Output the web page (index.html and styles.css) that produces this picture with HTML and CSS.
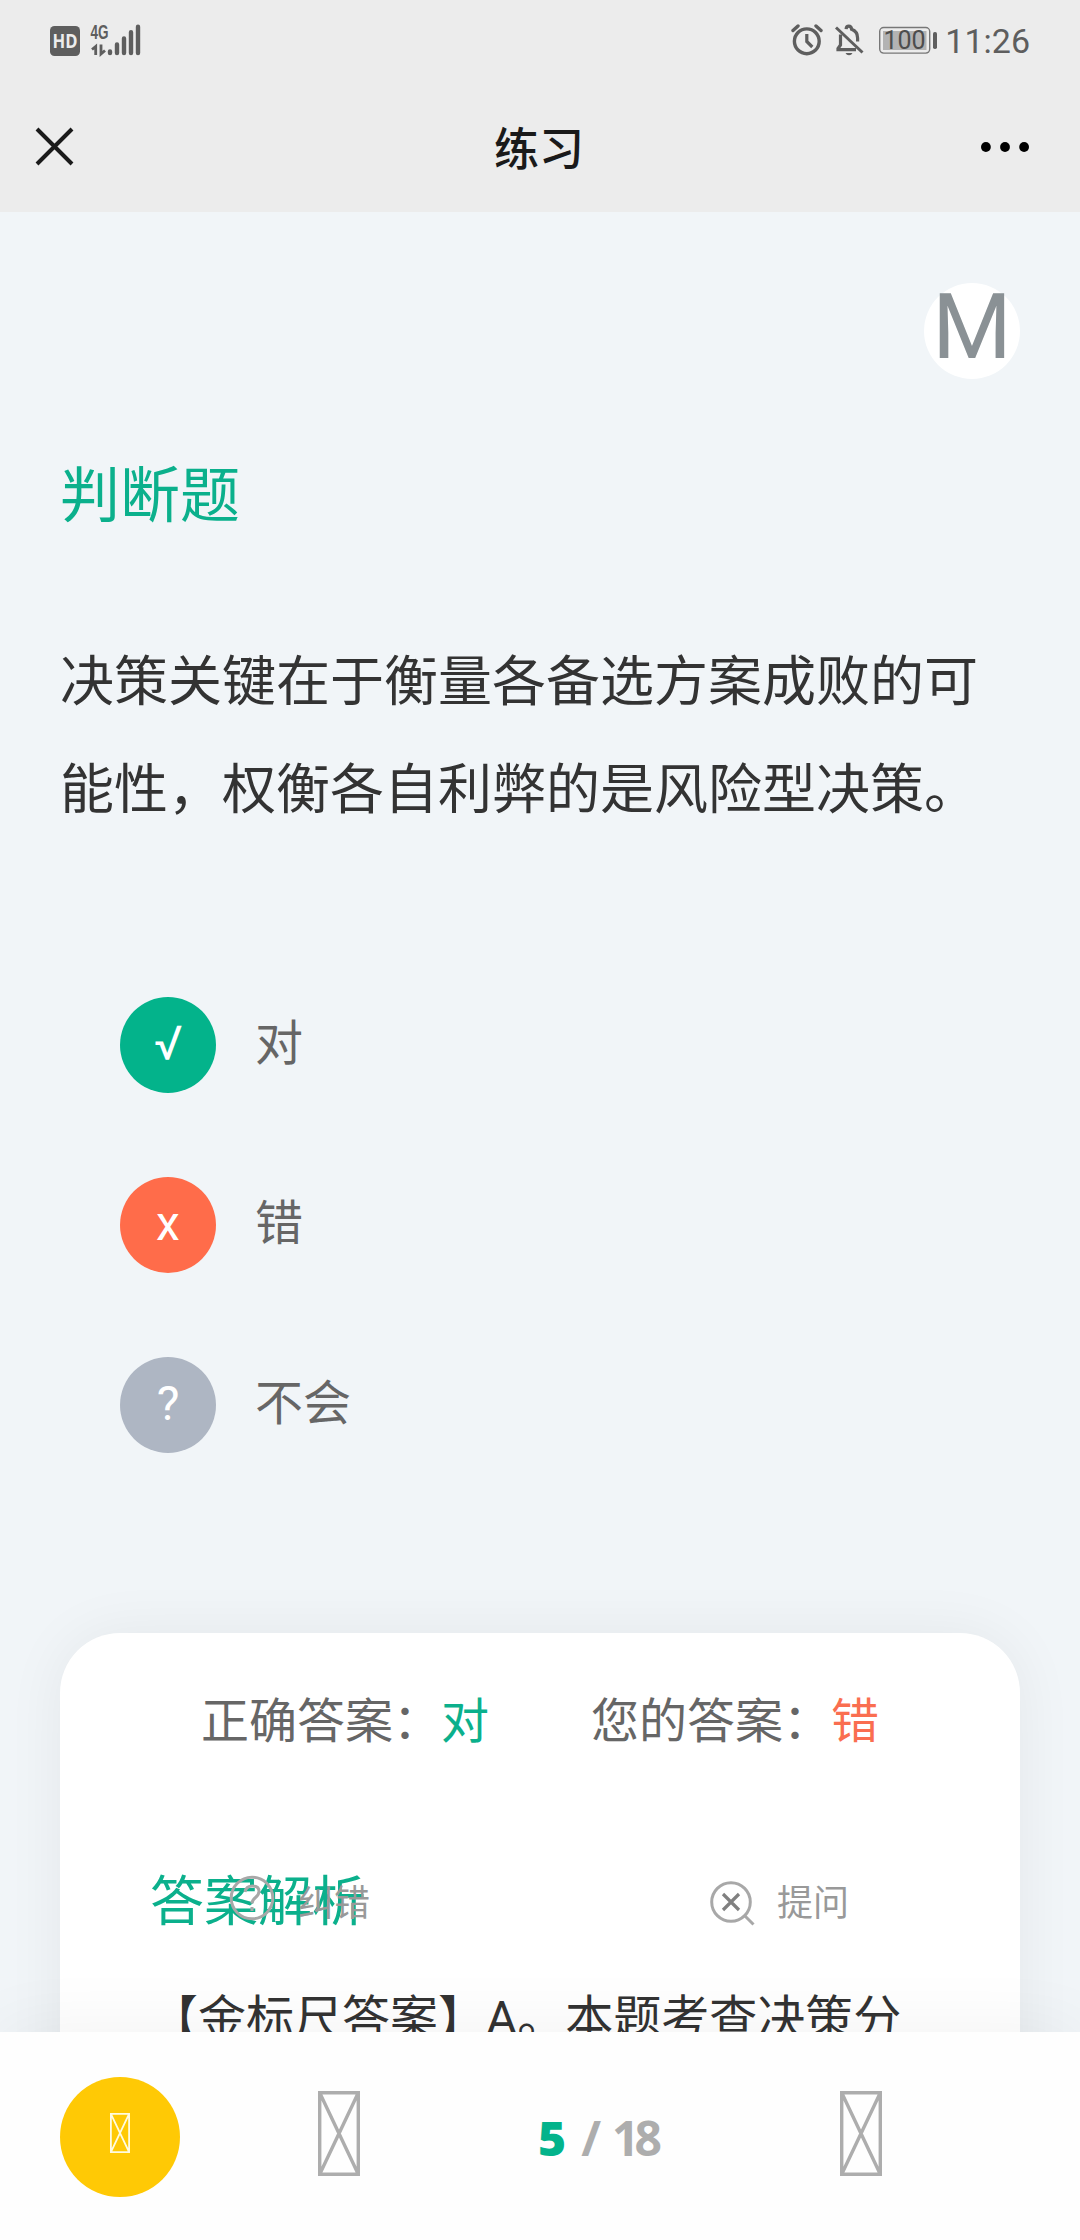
FILE: index.html
```html
<!DOCTYPE html>
<html lang="zh-CN">
<head>
<meta charset="utf-8">
<title>练习</title>
<link rel="stylesheet" href="styles.css">
</head>
<body>
<div class="screen">
  <header class="header">
    <div class="status">
      <svg class="status-left" width="92" height="50" viewBox="50 16 92 50">
        <rect x="50" y="26" width="30" height="30" rx="4.5" fill="#5e5e5e"/>
        <text x="52.6" y="48" class="hd" textLength="25" lengthAdjust="spacingAndGlyphs">HD</text>
        <text x="90.5" y="38.700" class="net" textLength="18" lengthAdjust="spacingAndGlyphs">4G</text>
        <path d="M95.700 55V46.500L92 49.500M101 44.500V54L105 50.500" fill="none" stroke="#5e5e5e" stroke-width="2.800"/>
        <path d="M110 51.500v1.500M117 44.500v8.500M124 38.500v14.500M131 32.200v20.800M138 26.800v26.200" stroke="#5e5e5e" stroke-width="4.400" stroke-linecap="round"/>
      </svg>
      <div class="status-right">
        <svg width="148" height="34" viewBox="790 24 148 34" fill="none" stroke="#5e5e5e">
          <circle cx="806.800" cy="41.300" r="12.400" stroke-width="3.400"/>
          <path d="M806.800 34v7.500l5.500 5.500" stroke-width="3.200"/>
          <path d="M793 30.500l5-4.500M821 30.500l-5-4.500" stroke-width="3.400" stroke-linecap="round"/>
          <path d="M836 27.500L862.500 52.500" stroke-width="3"/>
          <path d="M840.500 34.500V45l-2.500 3.500v1.200h18M857.600 41.500V38q0-6.500-6-8.700q-.3-3.200-2.800-3.200t-2.700 3" stroke-width="3.200"/>
          <path d="M845.500 53h7q-1 2.200-3.500 2.200t-3.500-2.200z" fill="#5e5e5e" stroke="none"/>
          <rect x="879.700" y="27.500" width="50" height="25.600" rx="4" stroke="#777" stroke-width="1.400"/>
          <rect x="883" y="31" width="43.500" height="19" fill="#b3b3b3" stroke="none"/>
          <rect x="933" y="32" width="4" height="17" rx="1.800" fill="#5e5e5e" stroke="none"/>
          <text x="883.500" y="49.200" class="battery">100</text>
        </svg>
        <span class="time">11:26</span>
      </div>
    </div>
    <nav class="nav">
      <svg width="40" height="40" viewBox="0 0 40 40"><path d="M2 2L37 37M37 2L2 37" stroke="#1a1a1a" stroke-width="4" fill="none"/></svg>
      <h1 class="title">练习</h1>
      <svg class="more" width="48" height="10" viewBox="0 0 48 10"><circle cx="4.900" cy="5" r="4.900"/><circle cx="24" cy="5" r="4.900"/><circle cx="43.100" cy="5" r="4.900"/></svg>
    </nav>
  </header>

  <main class="main">
    <div class="avatar">M</div>
    <h2 class="kind">判断题</h2>
    <p class="question">决策关键在于衡量各备选方案成败的可能性，权衡各自利弊的是风险型决策。</p>
    <ul class="options">
      <li class="option"><span class="mark right">√</span><span class="label">对</span></li>
      <li class="option"><span class="mark wrong">x</span><span class="label">错</span></li>
      <li class="option"><span class="mark unknown">?</span><span class="label">不会</span></li>
    </ul>
    <section class="card">
      <div class="answers">
        <div>正确答案：<span class="green">对</span></div>
        <div>您的答案：<span class="red">错</span></div>
      </div>
      <h3 class="analysis-title">答案解析</h3>
      <div class="tools">
        <div class="tool">
          <svg class="tool-fix" width="48" height="48" viewBox="0 0 48 48" fill="none" stroke="#a8a8a8" stroke-width="3"><circle cx="23" cy="23" r="20.800"/><path d="M16 17q1-6 7.500-6t6.500 5.500q0 3-3.500 6t-3.500 6M23 32v4"/></svg>
          <span class="tool-name">纠错</span>
        </div>
        <div class="tool">
          <svg width="48" height="48" viewBox="0 0 48 48" fill="none" stroke="#a8a8a8" stroke-width="3"><circle cx="23" cy="24" r="19.300"/><path d="M37 38l8.500 8.500"/><path d="M15 16l16 16M31 16l-16 16" stroke="#808080" stroke-width="3.200"/></svg>
          <span class="tool-name">提问</span>
        </div>
      </div>
      <p class="analysis">【金标尺答案】A。本题考查决策分</p>
    </section>
  </main>

  <footer class="footer">
    <div class="fab"><svg width="20" height="40" viewBox="0 0 20 40" fill="none" stroke="#fffbe0" stroke-width="1.800"><path d="M.9.9h18.200v38.200H.9zL19.100 39.100M19.100.9L.9 39.100"/></svg></div>
    <svg class="prev" width="42" height="85" viewBox="0 0 42 85" fill="none" stroke="#adadad" stroke-width="3.400"><path d="M1.700 1.700h38.600v81.600H1.700zL40.300 83.300M40.300 1.700L1.700 83.300"/></svg>
    <div class="page"><b class="current">5</b><span>/</span><span class="total">18</span></div>
    <svg class="next" width="42" height="85" viewBox="0 0 42 85" fill="none" stroke="#adadad" stroke-width="3.400"><path d="M1.700 1.700h38.600v81.600H1.700zL40.300 83.300M40.300 1.700L1.700 83.300"/></svg>
  </footer>
</div>
</body>
</html>
```
FILE: styles.css
```css
* { box-sizing: border-box; margin: 0; padding: 0; }
body { background: #f1f5f8; font-family: Roboto, "Noto Sans CJK SC", sans-serif; }
svg { display: block; flex: none; }
.screen { width: 1080px; height: 2240px; overflow: hidden; display: flex; flex-direction: column; }

.header { height: 212px; flex: none; background: #ececec; color: #1a1a1a; }
.status { height: 82px; padding: 0 50px; display: flex; justify-content: space-between; align-items: center; }
.status-right { display: flex; align-items: center; gap: 7px; }
.time { font-size: 34px; line-height: 34px; color: #5e5e5e; }
.hd { font: bold 20px "Open Sans", sans-serif; fill: #ececec; }
.net { font: bold 20px "Liberation Sans", sans-serif; fill: #5e5e5e; }
.battery { font: 25px Roboto, sans-serif; fill: #4d4d4d; stroke: none; }
.nav { height: 130px; padding: 0 51px 0 35px; display: grid; grid-template-columns: 200px 1fr 200px; align-items: center; }
.title { padding: 8px 0 0 14px; font-size: 45px; line-height: 66px; font-weight: 500; text-align: center; }
.more { justify-self: end; fill: #000; }

.main { height: 1820px; flex: none; overflow: hidden; padding: 71px 60px 0; display: flex; flex-direction: column; }
.avatar { width: 96px; height: 96px; align-self: flex-end; flex: none; border-radius: 50%; background: #fff; color: #8a9195; font-size: 91px; line-height: 88px; text-align: center; }
.kind { margin-top: 73px; font-size: 60px; line-height: 90px; font-weight: 400; color: #0bb08c; }
.question { margin-top: 87px; font-size: 54px; line-height: 108px; color: #333; }
.options { list-style: none; margin: 152px 0 0 60px; display: flex; flex-direction: column; gap: 84px; }
.option { display: flex; align-items: center; gap: 39px; height: 96px; }
.mark { width: 96px; height: 96px; border-radius: 50%; color: #fff; font-size: 48px; line-height: 94px; text-align: center; }
.right { background: #03b38b; }
.wrong { background: #ff6c4a; }
.unknown { background: #aeb6c3; }
.label { font-size: 48px; line-height: 72px; color: #666; padding-bottom: 2px; }

.card { margin-top: 180px; height: 600px; flex: none; border-radius: 60px; background: #fff; box-shadow: 0 0 60px rgba(20, 20, 30, .06); padding: 53px 90px 0; }
.answers { display: flex; justify-content: center; gap: 102px; font-size: 48px; line-height: 72px; color: #666; }
.green { color: #0bb08c; }
.red { color: #fa6e50; }
.analysis-title { margin-top: 104px; font-size: 54px; line-height: 81px; font-weight: 400; color: #0bb08c; }
.tools { height: 81px; margin-top: -81px; padding: 0 0 2px 79px; display: flex; align-items: center; position: relative; font-size: 36px; color: #999; }
.tool { display: flex; flex: none; align-items: center; width: 479px; gap: 21px; }
.tool-fix { margin-bottom: 5px; }
.tool-name { padding-bottom: 4px; }
.analysis { margin-top: 40px; font-size: 48px; line-height: 72px; color: #333; white-space: nowrap; }

.footer { height: 208px; flex: none; position: relative; background: #fefefe; box-shadow: 0 0 75px rgba(0, 0, 0, .06); padding: 45px 60px 0; display: flex; align-items: flex-start; }
.fab { width: 120px; height: 120px; border-radius: 50%; background: #ffc905; display: flex; justify-content: center; padding-top: 36px; }
.prev { margin: 14px 0 0 138px; }
.page { width: 300px; margin: 28px 0 0 178px; display: flex; gap: 15px; font: 700 48px/66px "Open Sans", sans-serif; color: #adadad; }
.current { color: #03b38b; }
.total { margin-left: -4px; letter-spacing: -5px; }
.next { margin: 14px 0 0 2px; }
```
